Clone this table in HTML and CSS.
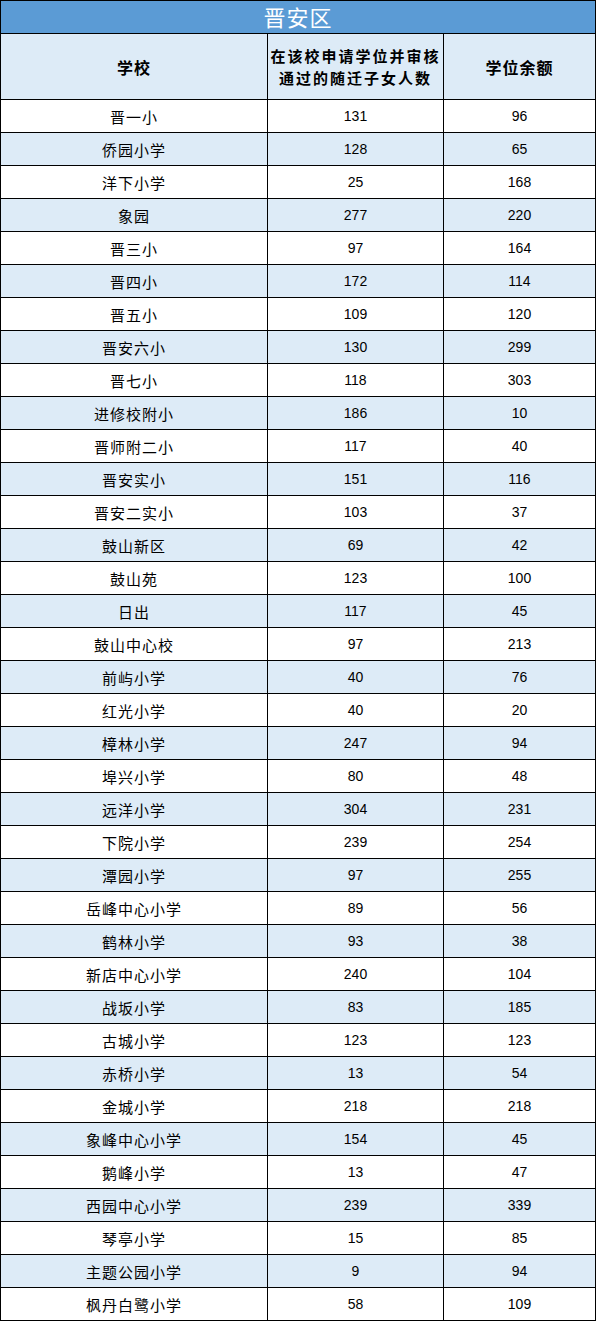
FILE: index.html
```html
<!DOCTYPE html>
<html lang="zh">
<head>
<meta charset="utf-8">
<link rel="stylesheet" href="styles.css">
</head>
<body>
<div class="sheet">
  <div class="title">晋安区</div>
  <div class="row head">
    <div class="cell">学校</div>
    <div class="cell stack"><span>在该校申请学位并审核</span><span>通过的随迁子女人数</span></div>
    <div class="cell">学位余额</div>
  </div>
  <div id="rows"></div>
</div>
<script src="app.js"></script>
</body>
</html>
```
FILE: app.js
```js
const data = [
["晋一小",131,96],["侨园小学",128,65],["洋下小学",25,168],["象园",277,220],["晋三小",97,164],
["晋四小",172,114],["晋五小",109,120],["晋安六小",130,299],["晋七小",118,303],["进修校附小",186,10],
["晋师附二小",117,40],["晋安实小",151,116],["晋安二实小",103,37],["鼓山新区",69,42],["鼓山苑",123,100],
["日出",117,45],["鼓山中心校",97,213],["前屿小学",40,76],["红光小学",40,20],["樟林小学",247,94],
["埠兴小学",80,48],["远洋小学",304,231],["下院小学",239,254],["潭园小学",97,255],["岳峰中心小学",89,56],
["鹤林小学",93,38],["新店中心小学",240,104],["战坂小学",83,185],["古城小学",123,123],["赤桥小学",13,54],
["金城小学",218,218],["象峰中心小学",154,45],["鹅峰小学",13,47],["西园中心小学",239,339],["琴亭小学",15,85],
["主题公园小学",9,94],["枫丹白鹭小学",58,109]
];
const box = document.getElementById('rows');
data.forEach((d, i) => {
  const r = document.createElement('div');
  r.className = 'row' + (i % 2 ? ' alt' : '');
  r.innerHTML = '<div class="cell name">' + d[0] + '</div><div class="cell num">' + d[1] + '</div><div class="cell num">' + d[2] + '</div>';
  box.appendChild(r);
});
```
FILE: styles.css
```css
html, body { margin: 0; padding: 0; background: #fff; }
.sheet {
  width: 596px;
  box-sizing: border-box;
  border-left: 1px solid #000;
  border-top: 1px solid #000;
  font-family: "Noto Sans CJK SC", sans-serif;
  color: #000;
}
.title {
  height: 33px;
  box-sizing: border-box;
  background: #5b9bd5;
  color: #fff;
  font-size: 22px;
  letter-spacing: 1px;
  line-height: 30px;
  text-align: center;
  border-right: 1px solid #000;
  border-bottom: 1px solid #000;
}
.row {
  display: grid;
  grid-template-columns: 267px 176px 152px;
  height: 33px;
}
.row.alt { background: #ddebf7; }
.row.head { height: 66px; background: #ddebf7; }
.cell {
  box-sizing: border-box;
  border-right: 1px solid #000;
  border-bottom: 1px solid #000;
  display: flex;
  align-items: center;
  justify-content: center;
  text-align: center;
}
.head .cell { font-weight: bold; font-size: 16px; letter-spacing: 1px; }
.head .stack {
  flex-direction: column;
  font-size: 15px;
  letter-spacing: 2px;
  line-height: 22px;
}
.name { font-size: 15px; letter-spacing: 1px; }
.num { font-family: "Liberation Sans", sans-serif; font-size: 14px; }
```
